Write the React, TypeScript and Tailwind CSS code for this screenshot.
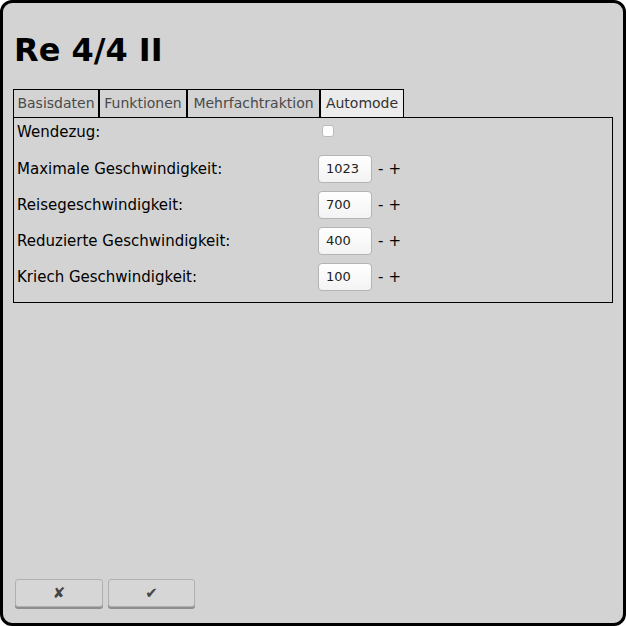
import React from 'react';

const tabs = [
  { name: 'Basisdaten', w: 'w-[86px]' },
  { name: 'Funktionen', w: 'w-[88px]' },
  { name: 'Mehrfachtraktion', w: 'w-[133px]' },
  { name: 'Automode', w: 'w-[84px]' },
];

const speeds = [
  { label: 'Maximale Geschwindigkeit:', value: '1023' },
  { label: 'Reisegeschwindigkeit:', value: '700' },
  { label: 'Reduzierte Geschwindigkeit:', value: '400' },
  { label: 'Kriech Geschwindigkeit:', value: '100' },
];

const App: React.FC = () => {
  const active = 3;

  return (
    <div
      className="w-[626px] h-[626px] bg-white"
      style={{ fontFamily: '"DejaVu Sans", sans-serif' }}
    >
      <div className="w-full h-full flex flex-col border-[3px] border-black rounded-[12px] bg-[#d3d3d3] overflow-hidden">
        {/* Title */}
        <div className="flex-1 px-[10px]">
          <h1 className="pt-[29px] pl-[1px] text-[32px] leading-[37px] font-bold text-black">
            Re 4/4 II
          </h1>

          {/* Tabs */}
          <div className="flex mt-[20px]">
            {tabs.map((tab, i) => (
              <div
                key={tab.name}
                className={`${tab.w} h-[28px] flex items-center justify-center whitespace-nowrap border border-black border-b-0 text-[14px] ${
                  i === active ? 'bg-[#ececec] text-[#333]' : 'text-[#4a4a4a]'
                }`}
              >
                {tab.name}
              </div>
            ))}
          </div>

          {/* Content */}
          <div className="border border-black pl-[3px] pb-[7px] text-[15px] text-black">
            <div className="h-[33px] flex items-start pt-[4px]">
              <span className="w-[301px] leading-[20px]">Wendezug:</span>
              <input
                type="checkbox"
                className="ml-[4px] mt-[3px] w-[12px] h-[12px] appearance-none rounded-[3px] border border-[#bbb] bg-white"
              />
            </div>
            {speeds.map((s) => (
              <div key={s.label} className="h-[36px] flex items-center">
                <span className="w-[301px]">{s.label}</span>
                <div className="w-[54px] h-[28px] rounded-[4px] border border-[#b4b4b4] bg-gradient-to-b from-white to-[#f3f3f3] flex items-center pl-[7px] text-[13px] text-[#222]">
                  {s.value}
                </div>
                <span className="ml-[6px] text-[15px]">-</span>
                <span className="ml-[5px] text-[15px]">+</span>
              </div>
            ))}
          </div>
        </div>

        {/* Buttons */}
        <div className="flex gap-[5px] pl-[12px] pb-[16px]">
          <button className="w-[88px] h-[28px] rounded-[3px] border border-[#b0b0b0] bg-[#d6d6d6] shadow-[0_2px_0_#8e8e8e] text-[15px] font-bold text-[#444]">
            ✘
          </button>
          <button className="w-[87px] h-[28px] rounded-[3px] border border-[#b0b0b0] bg-[#d6d6d6] shadow-[0_2px_0_#8e8e8e] text-[15px] font-bold text-[#444]">
            ✔
          </button>
        </div>
      </div>
    </div>
  );
};

export default App;
